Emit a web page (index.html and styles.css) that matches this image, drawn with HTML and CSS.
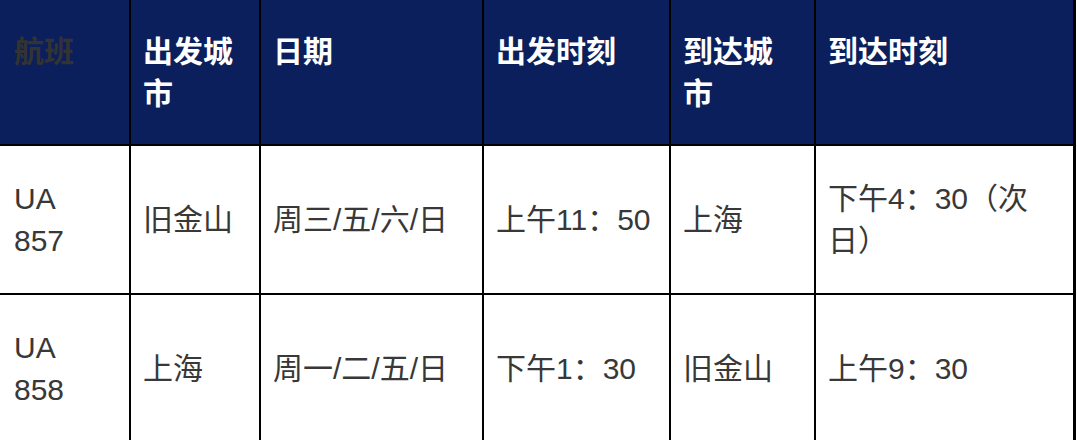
FILE: index.html
```html
<!DOCTYPE html>
<html lang="zh-CN">
<head>
<meta charset="utf-8">
<title>航班时刻表</title>
<link rel="stylesheet" href="styles.css">
</head>
<body>
<table class="schedule">
  <colgroup>
    <col class="c1"><col class="c2"><col class="c3"><col class="c4"><col class="c5"><col class="c6">
  </colgroup>
  <thead>
    <tr>
      <th class="first dim">航班</th>
      <th>出发城市</th>
      <th>日期</th>
      <th>出发时刻</th>
      <th>到达城市</th>
      <th>到达时刻</th>
    </tr>
  </thead>
  <tbody>
    <tr>
      <td class="first">UA 857</td>
      <td>旧金山</td>
      <td>周三/五/六/日</td>
      <td>上午11：50</td>
      <td>上海</td>
      <td>下午4：30（次日）</td>
    </tr>
    <tr>
      <td class="first">UA 858</td>
      <td>上海</td>
      <td>周一/二/五/日</td>
      <td>下午1：30</td>
      <td>旧金山</td>
      <td>上午9：30</td>
    </tr>
  </tbody>
</table>
</body>
</html>
```
FILE: styles.css
```css
html, body {
  margin: 0;
  padding: 0;
  background: #ffffff;
}
body {
  font-family: "Liberation Sans", "Noto Sans CJK SC", sans-serif;
  font-size: 30px;
  line-height: 42px;
  color: #383838;
  overflow: hidden;
}
.schedule {
  width: 1074px;
  table-layout: fixed;
  border-collapse: collapse;
}
.c1 { width: 130px; }
.c2 { width: 130px; }
.c3 { width: 223px; }
.c4 { width: 187px; }
.c5 { width: 145px; }
.c6 { width: 259px; }

.schedule th,
.schedule td {
  border: 2px solid #000000;
  padding: 0 16px 0 12px;
  text-align: left;
}
.schedule th {
  background: #0b1f5c;
  color: #ffffff;
  font-weight: bold;
  vertical-align: top;
  height: 145px;
  padding-top: 31px;
  box-sizing: border-box;
  border-top: none;
}
.schedule th.dim {
  color: #333333;
}
.schedule td {
  vertical-align: middle;
  height: 149px;
  box-sizing: border-box;
}
.schedule .first {
  border-left: none;
  padding-left: 14px;
  padding-right: 20px;
}
.schedule th:last-child,
.schedule td:last-child {
  border-right: 3px solid #000000;
}
```
